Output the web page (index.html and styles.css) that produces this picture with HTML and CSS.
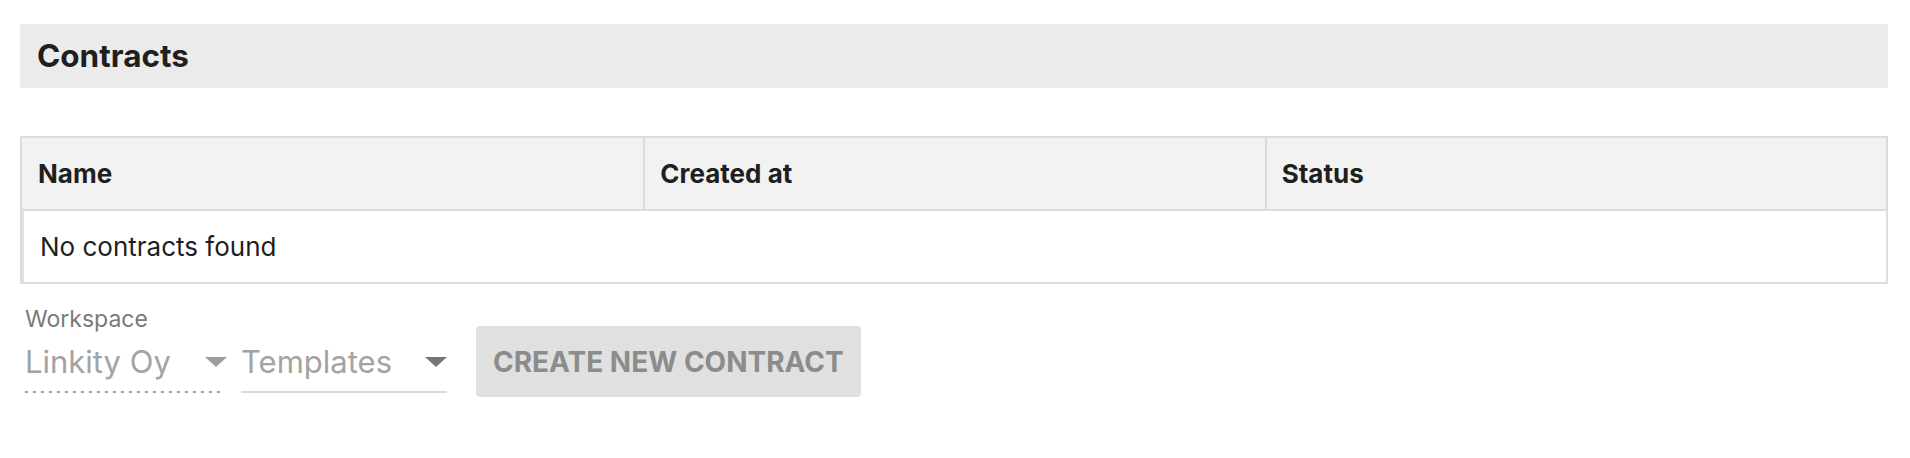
FILE: index.html
```
<!DOCTYPE html>
<html lang="en">
<head>
<meta charset="utf-8">
<title>Contracts</title>
<link rel="stylesheet" href="styles.css">
</head>
<body>
<div class="page">
  <div class="title-bar"><h1 class="title">Contracts</h1></div>
  <table class="contracts">
    <thead>
      <tr>
        <th>Name</th>
        <th>Created at</th>
        <th>Status</th>
      </tr>
    </thead>
    <tbody>
      <tr><td colspan="3">No contracts found</td></tr>
    </tbody>
  </table>
  <div class="actions">
    <div class="field field-workspace">
      <span class="field-label">Workspace</span>
      <div class="select select-disabled">
        <span class="select-value">Linkity Oy</span>
        <svg class="arrow arrow-out" viewBox="0 0 22 10" width="22" height="10"><path d="M0 0h22l-11 10z"/></svg>
      </div>
    </div>
    <div class="field field-templates">
      <div class="select select-plain">
        <span class="select-value">Templates</span>
        <svg class="arrow arrow-dark" viewBox="0 0 22 10" width="22" height="10"><path d="M0 0h22l-11 10z"/></svg>
      </div>
    </div>
    <button class="create-btn" disabled>Create new contract</button>
  </div>
</div>
</body>
</html>
```

FILE: styles.css
```
html, body {
  margin: 0;
  padding: 0;
  background: #ffffff;
}

body {
  font-family: "Inter", "Roboto", "Liberation Sans", sans-serif;
  color: #212121;
}

.page {
  padding: 24px 22px 0 20px;
}

.title-bar {
  background: #ebebeb;
  height: 64px;
  display: flex;
  align-items: center;
  padding-left: 17px;
}

.title {
  margin: 0;
  font-size: 31.5px;
  font-weight: 700;
  color: #1f1f1f;
  line-height: 1;
}

.contracts {
  margin-top: 48px;
  width: 100%;
  border-collapse: separate;
  border-spacing: 0;
  border: 2px solid #dcdcdc;
  table-layout: fixed;
}

.contracts th {
  background: #f2f2f2;
  height: 71px;
  padding: 0 16px;
  text-align: left;
  font-size: 26px;
  font-weight: 700;
  color: #1f1f1f;
  border-bottom: 2px solid #dcdcdc;
  vertical-align: middle;
}

.contracts th + th {
  border-left: 2px solid #dcdcdc;
  padding-left: 15px;
}

.contracts td {
  height: 71px;
  padding: 0 16px;
  font-size: 26px;
  font-weight: 400;
  color: #1f1f1f;
  border-left: 2px solid #e2e2e2;
  vertical-align: middle;
}

.actions {
  display: flex;
  align-items: flex-start;
  margin: 22px 0 0 5px;
}

.field {
  display: flex;
  flex-direction: column;
}

.field-workspace {
  width: 195px;
}

.field-templates {
  width: 206px;
  margin-left: 21px;
  padding-top: 27px;
}

.field-label {
  font-size: 23px;
  line-height: 27px;
  color: #7a7a7a;
}

.select {
  display: flex;
  align-items: center;
  justify-content: space-between;
  padding: 10px 0 10px;
  font-size: 31px;
  line-height: 38px;
  color: #a3a3a3;
}

.select-disabled {
  background-image: linear-gradient(to right, #a0a0a0 0 3px, transparent 3px);
  background-size: 8px 2px;
  background-repeat: repeat-x;
  background-position: left bottom;
  padding-bottom: 12px;
}

.select-plain {
  border-bottom: 2px solid #dadada;
}

.arrow {
  fill: #9e9e9e;
  flex: none;
}

.arrow-out {
  margin-right: -7px;
}

.arrow-dark {
  fill: #757575;
}

.create-btn {
  margin: 20px 0 0 29px;
  height: 71px;
  padding: 0 17px;
  border: none;
  border-radius: 4px;
  background: #e0e0e0;
  color: #8c8c8c;
  font-family: "Inter", "Roboto", "Liberation Sans", sans-serif;
  font-size: 28px;
  font-weight: 700;
  text-transform: uppercase;
  cursor: default;
}
```
